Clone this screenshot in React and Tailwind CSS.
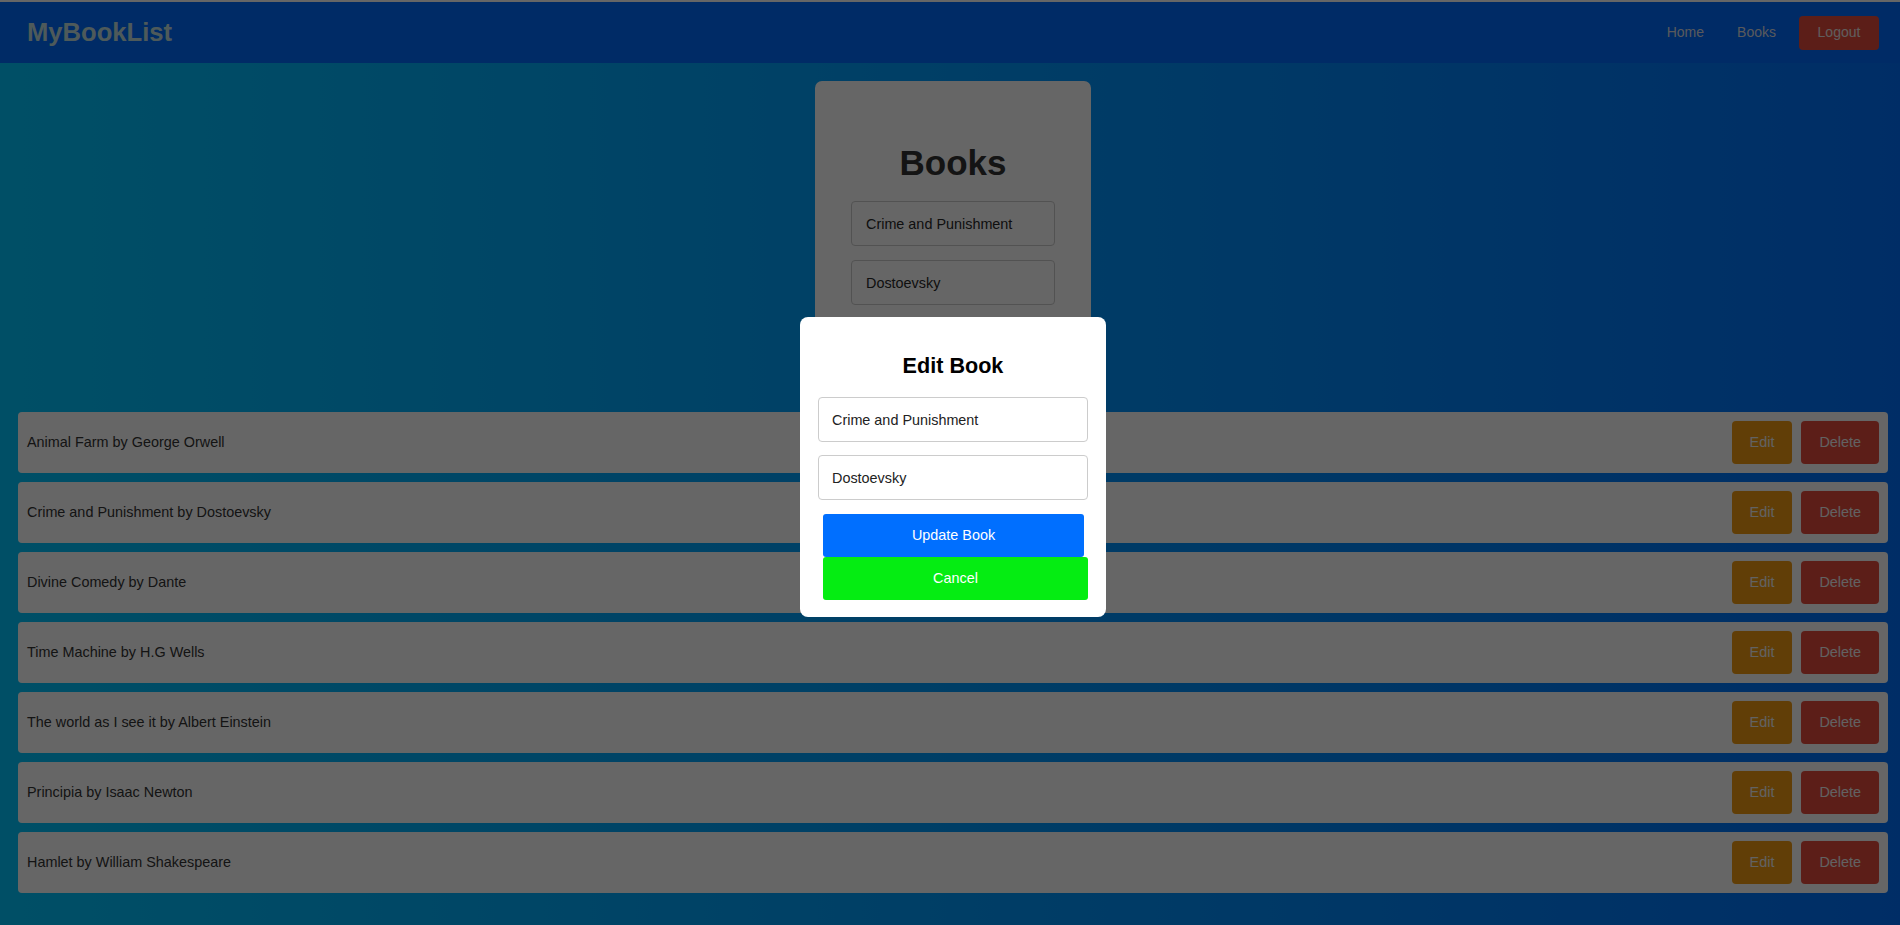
import { useState } from "react";

const books = [
  { title: "Animal Farm", author: "George Orwell" },
  { title: "Crime and Punishment", author: "Dostoevsky" },
  { title: "Divine Comedy", author: "Dante" },
  { title: "Time Machine", author: "H.G Wells" },
  { title: "The world as I see it", author: "Albert Einstein" },
  { title: "Principia", author: "Isaac Newton" },
  { title: "Hamlet", author: "William Shakespeare" },
];

const App = () => {
  const [title, setTitle] = useState("Crime and Punishment");
  const [author, setAuthor] = useState("Dostoevsky");
  const [editTitle, setEditTitle] = useState("Crime and Punishment");
  const [editAuthor, setEditAuthor] = useState("Dostoevsky");

  return (
    <div className="relative min-h-screen bg-[linear-gradient(to_right,#00c6ff,#0072ff)] font-['Liberation_Sans',Arial,sans-serif] text-[14.4px] text-[#333]">
      <div className="h-[2px] bg-white" />

      {/* Navbar */}
      <nav className="flex h-[61px] items-center justify-between bg-[#006bff] pl-[27px] pr-[21px]">
        <span className="text-[25.6px] font-bold text-[#c4e0e0]">MyBookList</span>
        <div className="flex items-center text-[14px]">
          <a className="text-[#dedfe6]">Home</a>
          <a className="ml-[33px] text-[#dedfe6]">Books</a>
          <button className="ml-[23px] h-[34px] w-[80px] rounded-[4px] bg-[#e74c3c] text-[#f0e8e8]">
            Logout
          </button>
        </div>
      </nav>

      {/* Add book card */}
      <div className="flex justify-center pl-[6px] pt-[18px]">
        <div className="flex w-[276px] flex-col items-center rounded-[7px] bg-white pb-[32px] pt-[62px]">
          <h2 className="mb-[18px] text-[35px] font-bold leading-[40px]">Books</h2>
          <div className="flex w-[204px] flex-col gap-[14px]">
            <input
              value={title}
              onChange={(e) => setTitle(e.target.value)}
              className="h-[45px] rounded-[4px] border border-[#ccc] px-[14px] text-[14.4px] text-[#282828] outline-none"
            />
            <input
              value={author}
              onChange={(e) => setAuthor(e.target.value)}
              className="h-[45px] rounded-[4px] border border-[#ccc] px-[14px] text-[14.4px] text-[#282828] outline-none"
            />
            <button className="h-[43px] rounded-[4px] bg-[#006fff] text-white">Add Book</button>
          </div>
        </div>
      </div>

      {/* Book list */}
      <div className="flex flex-col gap-[9px] pb-[32px] pl-[18px] pr-[12px] pt-[18px]">
        {books.map((book, index) => (
          <div
            key={index}
            className="flex h-[61px] items-center justify-between rounded-[4px] bg-white pl-[9px] pr-[9px]"
          >
            <span>
              {book.title} by {book.author}
            </span>
            <div className="flex gap-[9px]">
              <button className="h-[43px] rounded-[4px] bg-[#f39c12] px-[18px] text-[#f4f4f4]">Edit</button>
              <button className="h-[43px] rounded-[4px] bg-[#e74c3c] px-[18px] text-[#f4f4f4]">Delete</button>
            </div>
          </div>
        ))}
      </div>

      {/* Edit modal */}
      <div className="fixed inset-0 flex items-center justify-center bg-black/60 pl-[6px] pt-[9px]">
        <div className="w-[306px] rounded-[8px] bg-white px-[18px] pb-[17px] pt-[36px]">
          <h3 className="mb-[19px] text-center text-[21.6px] font-bold leading-[25px] text-black">Edit Book</h3>
          <div className="flex flex-col gap-[13px]">
            <input
              value={editTitle}
              onChange={(e) => setEditTitle(e.target.value)}
              className="h-[45px] rounded-[4px] border border-[#ccc] px-[13px] text-[14.4px] text-[#222] outline-none"
            />
            <input
              value={editAuthor}
              onChange={(e) => setEditAuthor(e.target.value)}
              className="h-[45px] rounded-[4px] border border-[#ccc] px-[13px] text-[14.4px] text-[#222] outline-none"
            />
          </div>
          <div className="mt-[14px] flex flex-col">
            <button className="ml-[5px] h-[43px] w-[261px] rounded-[3px] bg-[#006fff] text-white">Update Book</button>
            <button className="ml-[5px] h-[43px] w-[265px] rounded-[3px] bg-[#05ed12] text-white">Cancel</button>
          </div>
        </div>
      </div>
    </div>
  );
};

export default App;
